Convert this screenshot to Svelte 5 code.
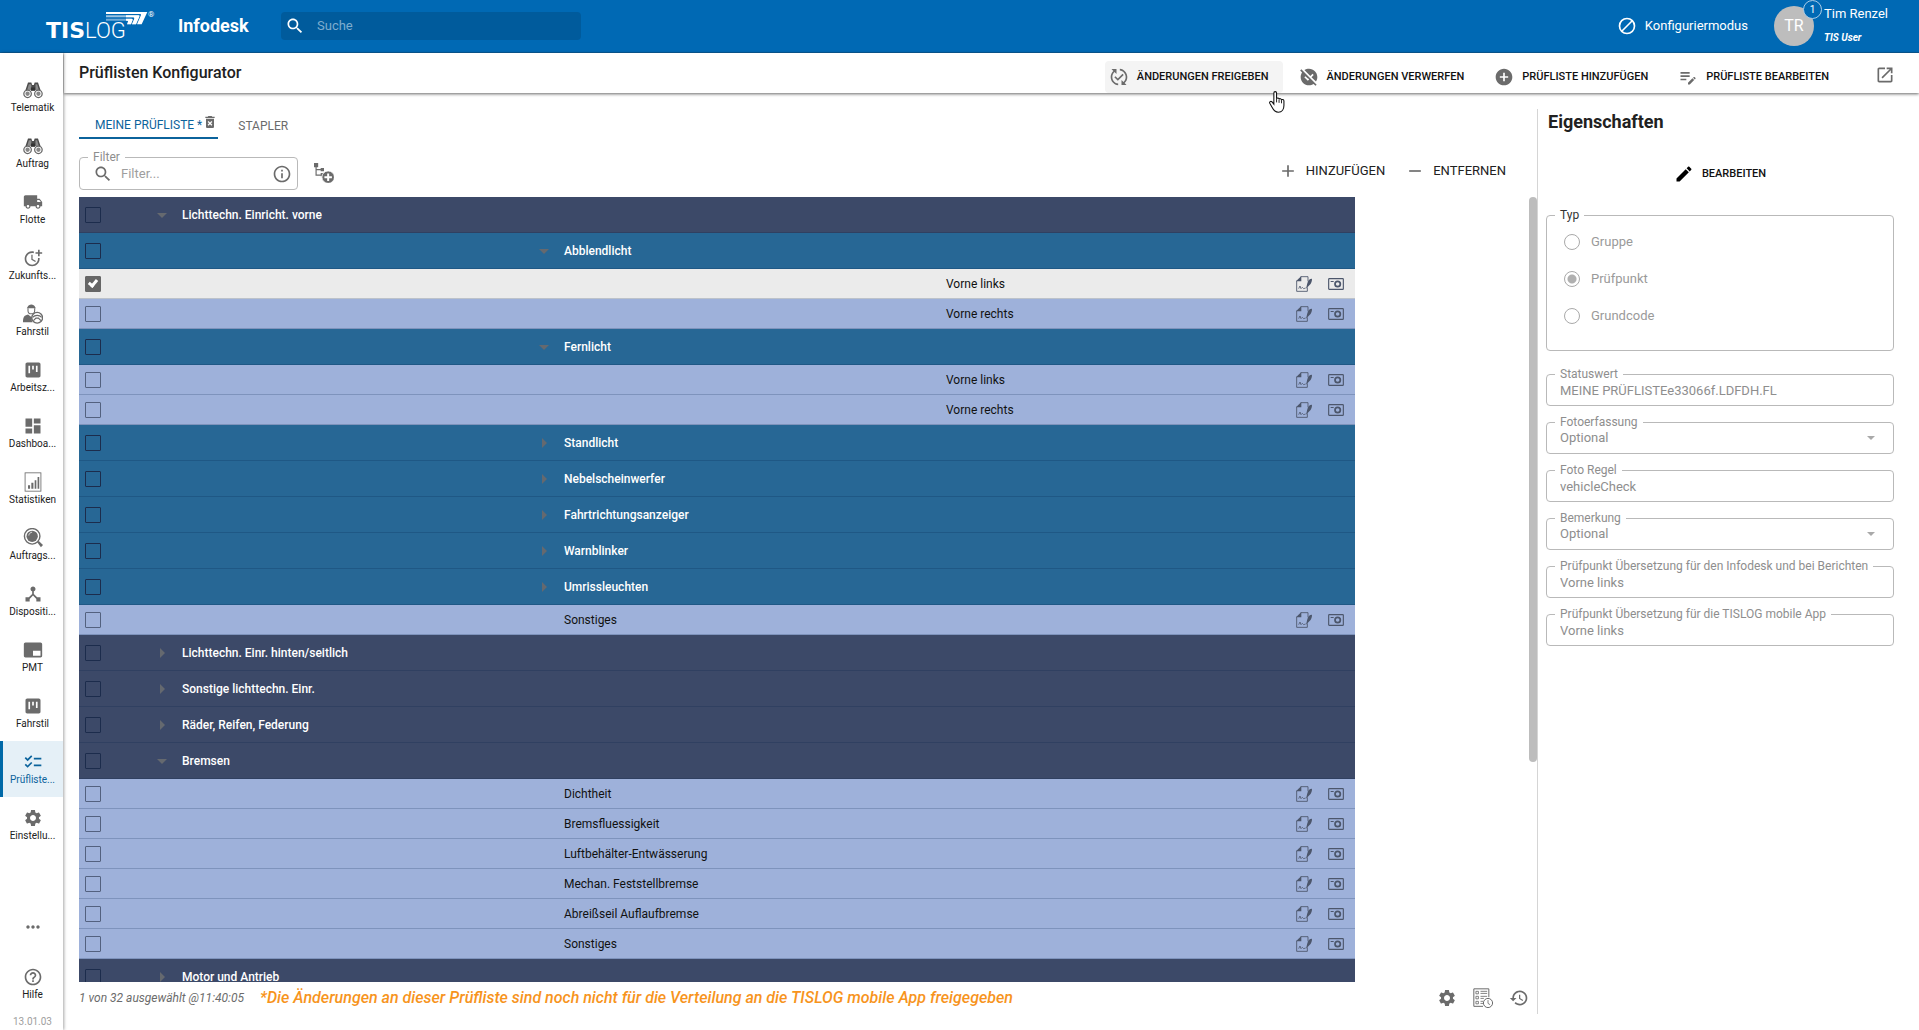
<script>
  const P = {
    search: 'M15.5 14h-.79l-.28-.27C15.41 12.59 16 11.11 16 9.5 16 5.91 13.09 3 9.5 3S3 5.91 3 9.5 5.91 16 9.5 16c1.61 0 3.09-.59 4.23-1.57l.27.28v.79l5 4.99L20.49 19l-4.99-5zm-6 0C7.01 14 5 11.99 5 9.5S7.01 5 9.5 5 14 7.01 14 9.5 11.99 14 9.5 14z',
    info: 'M11 7h2v2h-2zm0 4h2v6h-2zm1-9C6.48 2 2 6.48 2 12s4.48 10 10 10 10-4.48 10-10S17.52 2 12 2zm0 18c-4.41 0-8-3.59-8-8s3.59-8 8-8 8 3.59 8 8-3.59 8-8 8z',
    truck: 'M20 8h-3V4H3c-1.1 0-2 .9-2 2v11h2c0 1.66 1.34 3 3 3s3-1.34 3-3h6c0 1.66 1.34 3 3 3s3-1.34 3-3h2v-5l-3-4zM6 18.5c-.83 0-1.5-.67-1.5-1.5s.67-1.5 1.5-1.5 1.5.67 1.5 1.5-.67 1.5-1.5 1.5zm13.5-9l1.96 2.5H17V9.5h2.5zm-1.5 9c-.83 0-1.5-.67-1.5-1.5s.67-1.5 1.5-1.5 1.5.67 1.5 1.5-.67 1.5-1.5 1.5z',
    moretime: 'M10 8v6l4.7 2.9.8-1.2-4-2.4V8zM17.92 12c.05.33.08.66.08 1 0 3.9-3.1 7-7 7s-7-3.1-7-7c0-3.9 3.1-7 7-7 .7 0 1.37.1 2 .29V4.23c-.64-.15-1.31-.23-2-.23-5 0-9 4-9 9s4 9 9 9 9-4 9-9c0-.34-.02-.67-.06-1h-2.02zM20 5V2h-2v3h-3v2h3v3h2V7h3V5z',
    board: 'M19 3H5c-1.1 0-2 .9-2 2v14c0 1.1.9 2 2 2h14c1.1 0 2-.9 2-2V5c0-1.1-.9-2-2-2zM8.5 16h-2V7h2zM13 11.500h-2V7h2zM17.500 14.500h-2V7h2z',
    dashboard: 'M3 13h8V3H3v10zm0 8h8v-6H3v6zm10 0h8V11h-8v10zm0-18v6h8V3h-8z',
    hub: 'M17 16l-4-4V8.820C14.160 8.400 15 7.300 15 6c0-1.660-1.340-3-3-3S9 4.340 9 6c0 1.300.840 2.400 2 2.820V12l-4 4H3v5h5v-3.050l4-4.200 4 4.200V21h5v-5h-4z',
    pip: 'M21 3H3c-1.100 0-2 .9-2 2v14c0 1.100.9 2 2 2h18c1.100 0 2-.9 2-2V5c0-1.100-.9-2-2-2zm0 16h-9v-6h9v6z',
    checklist: 'M22 7h-9v2h9V7zm0 8h-9v2h9v-2zM5.540 11L2 7.460l1.410-1.410 2.120 2.120 4.240-4.240 1.410 1.410L5.540 11zm0 8L2 15.460l1.410-1.410 2.120 2.120 4.240-4.240 1.410 1.410L5.540 19z',
    gear: 'M19.14 12.94c.04-.3.06-.61.06-.94 0-.32-.02-.64-.07-.94l2.03-1.58c.18-.14.23-.41.12-.61l-1.92-3.32c-.12-.22-.37-.29-.59-.22l-2.39.96c-.5-.38-1.03-.7-1.62-.94l-.36-2.54c-.04-.24-.24-.41-.48-.41h-3.84c-.24 0-.43.17-.47.41l-.36 2.54c-.59.24-1.13.57-1.62.94l-2.39-.96c-.22-.08-.47 0-.59.22L2.74 8.87c-.12.21-.08.47.12.61l2.03 1.58c-.05.3-.09.63-.09.94s.02.64.07.94l-2.03 1.58c-.18.14-.23.41-.12.61l1.92 3.32c.12.22.37.29.59.22l2.39-.96c.5.38 1.03.7 1.62.94l.36 2.54c.05.24.24.41.48.41h3.84c.24 0 .44-.17.47-.41l.36-2.54c.59-.24 1.13-.56 1.62-.94l2.39.96c.22.08.47 0 .59-.22l1.92-3.32c.12-.22.07-.47-.12-.61l-2.01-1.58zM12 15.6c-1.98 0-3.6-1.62-3.6-3.6s1.62-3.6 3.6-3.6 3.600 1.620 3.600 3.600-1.620 3.600-3.600 3.600z',
    help: 'M11 18h2v-2h-2v2zm1-16C6.48 2 2 6.48 2 12s4.48 10 10 10 10-4.48 10-10S17.52 2 12 2zm0 18c-4.410 0-8-3.590-8-8s3.590-8 8-8 8 3.590 8 8-3.590 8-8 8zm0-14c-2.210 0-4 1.790-4 4h2c0-1.100.9-2 2-2s2 .9 2 2c0 2-3 1.750-3 5h2c0-2.250 3-2.500 3-5 0-2.210-1.790-4-4-4z',
    dots: 'M6 10c-1.100 0-2 .9-2 2s.9 2 2 2 2-.9 2-2-.9-2-2-2zm12 0c-1.100 0-2 .9-2 2s.9 2 2 2 2-.9 2-2-.9-2-2-2zm-6 0c-1.100 0-2 .9-2 2s.9 2 2 2 2-.9 2-2-.9-2-2-2z',
    history: 'M13 3c-4.970 0-9 4.030-9 9H1l3.890 3.890.070.140L9 12H6c0-3.870 3.130-7 7-7s7 3.130 7 7-3.130 7-7 7c-1.930 0-3.680-.790-4.940-2.060l-1.420 1.420C8.270 19.990 10.510 21 13 21c4.970 0 9-4.030 9-9s-4.030-9-9-9zm-1 5v5l4.280 2.540.720-1.210-3.500-2.080V8H12z',
    publish: 'M17.66 9.53l-7.07 7.07-4.24-4.24 1.41-1.41 2.83 2.83 5.66-5.66 1.41 1.41zM4 12c0-2.33 1.02-4.42 2.62-5.88L9 8.5v-6H3l2.2 2.2C3.24 6.52 2 9.11 2 12c0 5.19 3.95 9.45 9 9.95v-2.02c-3.94-.49-7-3.86-7-7.93zm18 0c0-5.19-3.95-9.45-9-9.95v2.02c3.94.49 7 3.86 7 7.93 0 2.33-1.02 4.42-2.62 5.88L15 15.5v6h6l-2.2-2.2c1.96-1.82 3.2-4.41 3.2-7.3z',
    unpublish: 'M21.19 21.19 2.81 2.81 1.39 4.22l2.27 2.27C2.61 8.07 2 9.96 2 12c0 5.52 4.48 10 10 10 2.04 0 3.93-.61 5.51-1.66l2.27 2.27 1.41-1.42zm-10.6-4.59-4.24-4.24 1.41-1.41 2.83 2.83.18-.18 1.41 1.41-1.59 1.59zm3-5.84-7.1-7.1C8.07 2.61 9.96 2 12 2c5.52 0 10 4.48 10 10 0 2.04-.61 3.93-1.66 5.51l-5.34-5.34 2.65-2.65-1.41-1.41-2.65 2.65z',
    addcircle: 'M12 2C6.48 2 2 6.48 2 12s4.48 10 10 10 10-4.48 10-10S17.52 2 12 2zm5 11h-4v4h-2v-4H7v-2h4V7h2v4h4v2z',
    editnote: 'M3 10h11v2H3v-2zm0-2h11V6H3v2zm0 8h7v-2H3v2zm15.01-3.13.71-.71c.39-.39 1.02-.39 1.41 0l.71.71c.39.39.39 1.02 0 1.41l-.71.71-2.12-2.12zm-.71.71-5.3 5.3V21h2.12l5.3-5.3-2.12-2.12z',
    open: 'M19 19H5V5h7V3H5c-1.11 0-2 .9-2 2v14c0 1.1.89 2 2 2h14c1.1 0 2-.9 2-2v-7h-2v7zM14 3v2h3.59l-9.83 9.83 1.41 1.41L19 6.41V10h2V3h-7z',
    edit: 'M3 17.25V21h3.75L17.81 9.94l-3.75-3.75L3 17.25zM20.71 7.04c.39-.39.39-1.02 0-1.41l-2.34-2.34c-.39-.39-1.02-.39-1.41 0l-1.83 1.83 3.75 3.75 1.83-1.83z',
    trash: 'M6 19c0 1.1.9 2 2 2h8c1.1 0 2-.9 2-2V7H6v12zm2.46-7.12l1.41-1.41L12 12.59l2.12-2.12 1.41 1.41L13.41 14l2.12 2.12-1.41 1.41L12 15.41l-2.12 2.12-1.41-1.41L10.59 14l-2.13-2.12zM15.5 4l-1-1h-5l-1 1H5v2h14V4z',
    plus: 'M19 13h-6v6h-2v-6H5v-2h6V5h2v6h6v2z',
    minus: 'M19 13H5v-2h14v2z'
  };

  const nav = [
    { label: 'Telematik', icon: 'binoculars' },
    { label: 'Auftrag', icon: 'binoculars' },
    { label: 'Flotte', icon: 'truck' },
    { label: 'Zukunfts...', icon: 'moretime' },
    { label: 'Fahrstil', icon: 'driver' },
    { label: 'Arbeitsz...', icon: 'board' },
    { label: 'Dashboa...', icon: 'dashboard' },
    { label: 'Statistiken', icon: 'chart' },
    { label: 'Auftrags...', icon: 'lens' },
    { label: 'Dispositi...', icon: 'hub' },
    { label: 'PMT', icon: 'pip' },
    { label: 'Fahrstil', icon: 'board' },
    { label: 'Prüfliste...', icon: 'checklist', active: true },
    { label: 'Einstellu...', icon: 'gear' }
  ];

  const actions = [
    { label: 'ÄNDERUNGEN FREIGEBEN', icon: 'publish', hover: true },
    { label: 'ÄNDERUNGEN VERWERFEN', icon: 'unpublish' },
    { label: 'PRÜFLISTE HINZUFÜGEN', icon: 'addcircle' },
    { label: 'PRÜFLISTE BEARBEITEN', icon: 'editnote' }
  ];

  // kind: root = top group, group = sub group, item = check point; level = column that holds the name
  const rows = [
    { kind: 'root', level: 0, name: 'Lichttechn. Einricht. vorne', open: true },
    { kind: 'group', level: 1, name: 'Abblendlicht', open: true },
    { kind: 'item', level: 2, name: 'Vorne links', checked: true },
    { kind: 'item', level: 2, name: 'Vorne rechts' },
    { kind: 'group', level: 1, name: 'Fernlicht', open: true },
    { kind: 'item', level: 2, name: 'Vorne links' },
    { kind: 'item', level: 2, name: 'Vorne rechts' },
    { kind: 'group', level: 1, name: 'Standlicht' },
    { kind: 'group', level: 1, name: 'Nebelscheinwerfer' },
    { kind: 'group', level: 1, name: 'Fahrtrichtungsanzeiger' },
    { kind: 'group', level: 1, name: 'Warnblinker' },
    { kind: 'group', level: 1, name: 'Umrissleuchten' },
    { kind: 'item', level: 1, name: 'Sonstiges' },
    { kind: 'root', level: 0, name: 'Lichttechn. Einr. hinten/seitlich' },
    { kind: 'root', level: 0, name: 'Sonstige lichttechn. Einr.' },
    { kind: 'root', level: 0, name: 'Räder, Reifen, Federung' },
    { kind: 'root', level: 0, name: 'Bremsen', open: true },
    { kind: 'item', level: 1, name: 'Dichtheit' },
    { kind: 'item', level: 1, name: 'Bremsfluessigkeit' },
    { kind: 'item', level: 1, name: 'Luftbehälter-Entwässerung' },
    { kind: 'item', level: 1, name: 'Mechan. Feststellbremse' },
    { kind: 'item', level: 1, name: 'Abreißseil Auflaufbremse' },
    { kind: 'item', level: 1, name: 'Sonstiges' },
    { kind: 'root', level: 0, name: 'Motor und Antrieb' }
  ];

  const types = ['Gruppe', 'Prüfpunkt', 'Grundcode'];

  const fields = [
    { label: 'Statuswert', value: 'MEINE PRÜFLISTEe33066f.LDFDH.FL' },
    { label: 'Fotoerfassung', value: 'Optional', select: true },
    { label: 'Foto Regel', value: 'vehicleCheck' },
    { label: 'Bemerkung', value: 'Optional', select: true },
    { label: 'Prüfpunkt Übersetzung für den Infodesk und bei Berichten', value: 'Vorne links' },
    { label: 'Prüfpunkt Übersetzung für die TISLOG mobile App', value: 'Vorne links' }
  ];
</script>

{#snippet icon(name)}
  <svg class="icon" viewBox="0 0 24 24" aria-hidden="true">
    {#if name === 'binoculars'}
      <path d="M6 3h4l1 3h2l1-3h4l3 9H13v-2h-2v2H3z" fill="#4a4a4a" />
      <path d="M7 5l-2 7h5V5zM15 5v7h4l-2-7z" fill="#8c8c8c" />
      <circle cx="5.500" cy="16.500" r="4.500" fill="#fff" stroke="#666" stroke-width="1.500" />
      <circle cx="5.500" cy="16.500" r="2.600" fill="#888" />
      <circle cx="18.500" cy="16.500" r="4.500" fill="#fff" stroke="#666" stroke-width="1.500" />
      <circle cx="18.500" cy="16.500" r="2.600" fill="#888" />
      <path d="M9.500 9h5v4h-5z" fill="#333" />
    {:else if name === 'driver'}
      <path d="M5.500 3.500c1-4 8-4 9 0l1 1.500h-11z" />
      <path d="M6 5v3c0 5 8 5 8 0V5" fill="none" stroke="currentColor" stroke-width="1.300" />
      <path d="M0 22c0-6 1-8.500 6-9.500l4 3 3-2c-3 3-3 6-1.500 8.500z" />
      <circle cx="17" cy="16.500" r="6.500" fill="#fff" stroke="currentColor" stroke-width="1.600" />
      <path d="M11.500 16c3-3 8-3 11 0M12.500 20l3-3h3l3 3" fill="none" stroke="currentColor" stroke-width="1.500" />
    {:else if name === 'chart'}
      <rect x="2.500" y="1" width="19" height="22" fill="none" stroke="currentColor" />
      <path d="M6 16h2.500v4H6zM10 13h2.500v7H10zM14 10h2v10h-2zM17.500 6h2v14h-2z" />
    {:else if name === 'lens'}
      <circle cx="11" cy="10" r="9.300" fill="none" stroke="currentColor" stroke-width="1.700" />
      <circle cx="11" cy="10" r="6.800" />
      <path d="M7 9c0-2 2-4 4-4" fill="none" stroke="#ddd" stroke-width="1.200" />
      <path d="M17 17l2-1.500 5 5-2.500 2.500z" />
    {:else if name === 'block'}
      <circle cx="12" cy="12" r="9" fill="none" stroke="currentColor" stroke-width="2" />
      <path d="M6 18L18 6" stroke="currentColor" stroke-width="2" />
    {:else if name === 'treeadd'}
      <path d="M0 0h5v5H0zM8 6h4v4H8zM8 12h4v4H8z" />
      <path d="M2.500 4v10.500H9M2.500 8H9" fill="none" stroke="currentColor" stroke-width="1.400" />
      <circle cx="17" cy="17" r="7.500" fill="currentColor" stroke="#fff" />
      <path d="M17 12.500v9M12.500 17h9" stroke="#fff" stroke-width="2.400" />
    {:else if name === 'sign'}
      <path d="M7 1h11v7M1 7v16h16v-6" fill="none" stroke="currentColor" stroke-width="1.300" />
      <path d="M8 0v8H0z" />
      <path d="M4 19l2-4 1.500 4 2-2 2 2 3-1" fill="none" stroke="currentColor" stroke-width="1.200" />
      <path d="M24 4c-4 0-6 3-7 7l-2 8 5-5c3-3 4-6 4-10z" />
    {:else if name === 'camera'}
      <rect x="1" y="4" width="22" height="16" rx="1" fill="none" stroke="currentColor" stroke-width="1.700" />
      <circle cx="14.500" cy="12" r="4" fill="none" stroke="currentColor" stroke-width="2.600" />
      <path d="M4 7.500h4.500V9H4z" />
    {:else if name === 'listclock'}
      <path d="M12 22H1V1h18v10" fill="none" stroke="currentColor" stroke-width="1.200" />
      <path d="M3.500 4h3v3h-3zM3.500 10h3v3h-3zM3.500 16h3v3h-3z" fill="none" stroke="currentColor" />
      <path d="M9 4h8M9 6.500h8M9 10h8M9 12.500h4M9 16h3M9 18.500h3" stroke="currentColor" />
      <circle cx="18" cy="18" r="5.500" fill="#fff" stroke="currentColor" stroke-width="1.200" />
      <path d="M18 14.500v4l2.500 1.500" fill="none" stroke="currentColor" />
    {:else}
      <path d={P[name]} />
    {/if}
  </svg>
{/snippet}

<div class="app">
  <header class="topbar">
    <div class="logo" aria-label="TISLOG">
      <span class="tis">TIS</span><span class="log">LOG</span>
      <svg class="swoosh" viewBox="0 0 126 39" aria-hidden="true">
        <path d="M0 0h124l-17 37H93l12-28q1-3-3-3H0z" fill="#fff" />
        <path d="M0 10h97q5 0 3 4L90 37H78l7-17q1-4-4-4H0z" fill="#9cc4e2" />
        <path d="M0 20h76q5 0 4 4l-5 13H63l3-8q1-3-3-3H0z" fill="#6fa9d4" />
        <path d="M60 10h37q5 0 3 4L90 37H78l7-17q1-4-4-4H60zM60 20h16q5 0 4 4l-5 13H63l3-8q1-3-3-3h-3z" fill="#fff" />
      </svg>
      <span class="reg">®</span>
    </div>
    <strong class="product">Infodesk</strong>
    <label class="search">
      {@render icon('search')}
      <input type="search" placeholder="Suche" aria-label="Suche" />
    </label>
    <button class="config">{@render icon('block')}<span>Konfiguriermodus</span></button>
    <div class="user">
      <div class="avatar">TR<span class="badge">1</span></div>
      <div class="who"><span class="name">Tim Renzel</span><em>TIS User</em></div>
    </div>
  </header>

  <nav class="sidebar">
    {#each nav as n}
      <a href="#nav" class="navitem" class:active={n.active}>{@render icon(n.icon)}<span>{n.label}</span></a>
    {/each}
    <button class="more" aria-label="Mehr">{@render icon('dots')}</button>
    <a href="#hilfe" class="navitem">{@render icon('help')}<span>Hilfe</span></a>
    <small>13.01.03</small>
  </nav>

  <div class="page">
    <div class="pagehead">
      <h1>Prüflisten Konfigurator</h1>
      <div class="actions">
        {#each actions as a}
          <button class="action" class:hover={a.hover}>
            {@render icon(a.icon)}<span>{a.label}</span>
            {#if a.hover}
              <svg class="cursor" viewBox="0 0 20 26" aria-hidden="true">
                <path d="M6.500 16V3.500c0-2 3-2 3 0V10c.5-1.500 2.800-1 2.800.5.6-1.200 2.700-.7 2.700.8.700-1 2.700-.5 2.700 1.200v5c0 4-2 7.500-6.200 7.500-4 0-5.500-2.500-7-5.500l-2.500-4.500c-.8-1.600 1.200-2.800 2.500-1.500z" fill="#fff" stroke="#111" stroke-width="1.200" />
                <path d="M9.500 10v4M12.300 11v3.500M15 12v3" stroke="#111" />
              </svg>
            {/if}
          </button>
        {/each}
      </div>
      <button class="openbtn" aria-label="In neuem Fenster öffnen">{@render icon('open')}</button>
    </div>

    <div class="body">
      <main>
        <div class="tabs" role="tablist">
          <button class="tab active" role="tab" aria-selected="true">MEINE PRÜFLISTE *{@render icon('trash')}</button>
          <button class="tab" role="tab" aria-selected="false">STAPLER</button>
        </div>
        <div class="tools">
          <label class="filter">
            <span class="caption">Filter</span>
            <span class="filterrow">
              {@render icon('search')}
              <input placeholder="Filter..." />
              {@render icon('info')}
            </span>
          </label>
          <button class="iconbtn" aria-label="Baum erweitern">{@render icon('treeadd')}</button>
          <span class="grow"></span>
          <button class="flat">{@render icon('plus')}<span>HINZUFÜGEN</span></button>
          <button class="flat">{@render icon('minus')}<span>ENTFERNEN</span></button>
        </div>

        <div class="scroll">
          <div class="clip">
            <table>
              <colgroup><col class="c-check" /><col /><col /><col /><col class="c-icons" /></colgroup>
              <tbody>
                {#each rows as r}
                  <tr class={r.kind} class:selected={r.checked}>
                    <td class="check"><input type="checkbox" checked={r.checked} aria-label={r.name} /></td>
                    {#each [0, 1, 2] as l}
                      <td>
                        {#if l === r.level}
                          <div class="cell">
                            <svg class="arrow" viewBox="0 0 10 10" aria-hidden="true">
                              {#if r.kind !== 'item'}
                                <path d={r.open ? 'M0 3h10L5 8z' : 'M3 0v10l5-5z'} />
                              {/if}
                            </svg>
                            <span>{r.name}</span>
                          </div>
                        {/if}
                      </td>
                    {/each}
                    <td>
                      {#if r.kind === 'item'}
                        <div class="rowicons">{@render icon('sign')}{@render icon('camera')}</div>
                      {/if}
                    </td>
                  </tr>
                {/each}
              </tbody>
            </table>
          </div>
          <div class="track"><div class="thumb"></div></div>
        </div>

        <footer>
          <em class="count">1 von 32 ausgewählt @11:40:05</em>
          <em class="warn">*Die Änderungen an dieser Prüfliste sind noch nicht für die Verteilung an die TISLOG mobile App freigegeben</em>
          <span class="grow"></span>
          <button class="iconbtn" aria-label="Einstellungen">{@render icon('gear')}</button>
          <button class="iconbtn" aria-label="Protokoll">{@render icon('listclock')}</button>
          <button class="iconbtn" aria-label="Verlauf">{@render icon('history')}</button>
        </footer>
      </main>

      <aside>
        <h2>Eigenschaften</h2>
        <button class="edit">{@render icon('edit')}<span>BEARBEITEN</span></button>
        <div class="field types" role="radiogroup" aria-label="Typ">
          <span class="caption dark">Typ</span>
          {#each types as t}
            <label class="radio"><input type="radio" name="typ" value={t} checked={t === 'Prüfpunkt'} disabled />{t}</label>
          {/each}
        </div>
        {#each fields as f}
          <label class="field">
            <span class="caption">{f.label}</span>
            {#if f.select}
              <span class="selectrow">
                <select disabled><option>{f.value}</option></select>
                <svg class="down" viewBox="0 0 8 4" aria-hidden="true"><path d="M0 0h8L4 4z" /></svg>
              </span>
            {:else}
              <input disabled value={f.value} />
            {/if}
          </label>
        {/each}
      </aside>
    </div>
  </div>
</div>

<style>
  :global(body) {
    margin: 0;
  }
  .app {
    display: grid;
    grid-template: 53px minmax(0, 1fr) / 64px minmax(0, 1fr);
    height: 100vh;
    overflow: hidden;
    background: #fff;
    color: #212121;
    font: 13px/16px Roboto, sans-serif;
  }
  button,
  input,
  select {
    font: inherit;
    color: inherit;
    background: none;
    border: 0;
    padding: 0;
    margin: 0;
    outline: 0;
    min-width: 0;
  }
  a {
    color: inherit;
    text-decoration: none;
  }
  .icon {
    width: 20px;
    height: 20px;
    flex: none;
    fill: currentColor;
    color: #6b6b6b;
  }
  .grow {
    flex: 1;
  }

  .topbar {
    grid-column: 1 / -1;
    display: flex;
    align-items: center;
    box-sizing: border-box;
    padding: 0 31px 0 46px;
    background: #0069b4;
    border-bottom: 1px solid #0a5c98;
    color: #fff;
  }
  .logo {
    display: flex;
    position: relative;
    width: 132px;
    padding-top: 10px;
    font-size: 22px;
    line-height: 24px;
  }
  .tis {
    font-family: 'DejaVu Sans', sans-serif;
    font-weight: 700;
  }
  .log {
    font-weight: 300;
  }
  .swoosh {
    position: absolute;
    left: 60px;
    top: 3px;
    width: 42px;
    height: 13px;
  }
  .reg {
    position: absolute;
    left: 102px;
    top: 0;
    font-size: 8px;
    line-height: 12px;
  }
  .product {
    width: 103px;
    font-size: 18px;
    line-height: 24px;
    font-weight: 700;
  }
  .search {
    display: flex;
    align-items: center;
    gap: 12px;
    box-sizing: border-box;
    width: 300px;
    height: 28px;
    padding: 0 4px;
    border-radius: 4px;
    background: #005b9c;
  }
  .topbar .icon {
    color: #fff;
  }
  .search input {
    flex: 1;
  }
  .search input::placeholder {
    color: #7fadcf;
    opacity: 1;
  }
  .config {
    display: flex;
    align-items: center;
    gap: 8px;
    margin-left: auto;
  }
  .user {
    display: flex;
    gap: 10px;
    margin-left: 26px;
  }
  .avatar {
    position: relative;
    width: 40px;
    height: 40px;
    border-radius: 50%;
    background: #bdbdbd;
    font-size: 16px;
    line-height: 40px;
    text-align: center;
  }
  .badge {
    position: absolute;
    right: -8px;
    top: -6px;
    width: 17px;
    height: 17px;
    border: 1px solid #a9cbe6;
    border-radius: 50%;
    background: #0069b4;
    font-size: 10px;
    line-height: 17px;
  }
  .who {
    display: flex;
    flex-direction: column;
    justify-content: space-between;
  }
  .who em {
    font-size: 10px;
    font-weight: 700;
  }

  .sidebar {
    display: flex;
    flex-direction: column;
    box-sizing: border-box;
    width: 63px;
    padding: 16px 0 2px;
    background: #fff;
    box-shadow: 1px 0 3px rgba(0, 0, 0, 0.35);
    font-size: 10px;
    line-height: 12px;
    z-index: 2;
  }
  .navitem {
    display: flex;
    flex-direction: column;
    align-items: center;
    gap: 2px;
    box-sizing: border-box;
    height: 56px;
    padding: 11px 0 0 2px;
    white-space: nowrap;
  }
  .navitem.active {
    box-shadow: inset 3px 0 #0069a8;
    background: #e5f0f7;
    color: #0b639c;
  }
  .navitem.active .icon {
    color: #0b639c;
  }
  .more {
    margin: auto auto 16px;
    padding-left: 3px;
  }
  .sidebar small {
    padding: 4px 0 0 2px;
    font-size: 10px;
    text-align: center;
    color: #9e9e9e;
  }

  .page {
    display: flex;
    flex-direction: column;
    min-height: 0;
  }
  .pagehead {
    display: flex;
    align-items: center;
    box-sizing: border-box;
    height: 40px;
    padding: 0 24px 0 15px;
    background: #fff;
    box-shadow: 0 1px 3px rgba(0, 0, 0, 0.6);
    z-index: 1;
  }
  h1 {
    flex: 1;
    margin: 0;
    font-size: 16px;
    line-height: 20px;
    font-weight: 500;
  }
  .actions {
    display: flex;
    align-self: flex-end;
    gap: 12px;
  }
  .action {
    display: flex;
    position: relative;
    align-items: center;
    gap: 8px;
    height: 32px;
    padding: 0 14px 0 4px;
    border-radius: 4px;
    color: #111;
    font-size: 11px;
    font-weight: 500;
    white-space: nowrap;
  }
  .action.hover {
    background: #f4f4f4;
  }
  .cursor {
    position: absolute;
    right: -3px;
    top: 28px;
    width: 18px;
    height: 25px;
  }
  .openbtn {
    display: flex;
    margin-left: 32px;
    padding-top: 4px;
  }

  .body {
    flex: 1;
    display: flex;
    min-height: 0;
    padding: 16px 25px 16px 15px;
  }
  main {
    flex: 1;
    display: flex;
    flex-direction: column;
    min-width: 0;
  }
  .tabs {
    display: flex;
    height: 30px;
    font-size: 12px;
  }
  .tab {
    display: flex;
    align-items: center;
    padding: 4px 20px 0;
    color: #6b6b6b;
  }
  .tab .icon {
    width: 16px;
    height: 16px;
    margin-bottom: 6px;
  }
  .tab.active {
    padding: 4px 0 0 16px;
    border-bottom: 2px solid #0b639c;
    color: #0b639c;
  }
  .tools {
    display: flex;
    align-items: flex-start;
    padding: 18px 31px 7px 0;
  }
  .filter,
  .field {
    display: flex;
    flex-direction: column;
    box-sizing: border-box;
    border: 1px solid #b9b9b9;
    border-radius: 4px;
  }
  .filter {
    width: 219px;
    height: 33px;
  }
  .caption {
    align-self: flex-start;
    margin: -8px 0 0 8px;
    padding: 0 5px;
    background: #fff;
    color: #8e8e8e;
    font-size: 12px;
    line-height: 14px;
    white-space: nowrap;
  }
  .caption.dark {
    color: #333;
  }
  .filterrow {
    display: flex;
    align-items: center;
    gap: 8px;
    height: 20px;
    padding: 0 5px 0 13px;
  }
  .filterrow input {
    flex: 1;
  }
  .filterrow input::placeholder {
    color: #9e9e9e;
    opacity: 1;
  }
  .iconbtn {
    display: flex;
  }
  .tools .iconbtn {
    margin: 6px 0 0 16px;
  }
  .flat {
    display: flex;
    align-items: center;
    gap: 8px;
    margin: 4px 0 0 20px;
  }

  .scroll {
    flex: 1;
    display: flex;
    min-height: 0;
  }
  .clip {
    flex: 1;
    overflow: hidden;
    padding-right: 174px;
  }
  table {
    width: 100%;
    table-layout: fixed;
    border-collapse: separate;
    border-spacing: 0;
    font-size: 12px;
  }
  .c-check {
    width: 70px;
  }
  .c-icons {
    width: 60px;
  }
  tr {
    height: 36px;
    background: #3c4968;
    color: #fff;
    font-weight: 500;
  }
  tr.group {
    background: #276795;
  }
  tr.item {
    height: 30px;
    background: #9eb1da;
    color: #111;
    font-weight: 400;
  }
  tr.item.selected {
    background: #ebebeb;
  }
  td {
    padding: 0;
    border-bottom: 1px solid rgba(0, 30, 70, 0.2);
  }
  .check {
    padding-left: 6px;
  }
  input[type='checkbox'] {
    display: grid;
    place-items: center;
    appearance: none;
    box-sizing: border-box;
    width: 16px;
    height: 16px;
    border: 1px solid #53617f;
    border-radius: 1px;
  }
  .root input[type='checkbox'],
  .group input[type='checkbox'] {
    border-color: #1c2c4c;
  }
  input[type='checkbox']:checked {
    border-color: #666;
    background: #666;
  }
  input[type='checkbox']:checked::after {
    content: '';
    width: 3px;
    height: 6px;
    margin-bottom: 2px;
    border: solid #fff;
    border-width: 0 3px 3px 0;
    transform: rotate(40deg);
  }
  .cell {
    display: flex;
    align-items: center;
    gap: 15px;
    padding-left: 8px;
    white-space: nowrap;
  }
  .arrow {
    width: 10px;
    height: 10px;
    fill: #65696f;
  }
  .rowicons {
    display: flex;
    gap: 16px;
    padding-left: 1px;
  }
  .rowicons .icon {
    width: 16px;
    height: 16px;
    color: #4c566b;
  }
  .track {
    width: 8px;
  }
  .thumb {
    height: 72%;
    border-radius: 4px;
    background: #bdbdbd;
  }
  footer {
    display: flex;
    align-items: center;
    gap: 16px;
    height: 32px;
    padding-right: 8px;
    white-space: nowrap;
  }
  .count {
    font-size: 12px;
    color: #6b6b6b;
  }
  .warn {
    color: #f7941d;
    font-size: 16px;
    line-height: 20px;
    font-weight: 500;
  }

  aside {
    display: flex;
    flex-direction: column;
    box-sizing: border-box;
    width: 357px;
    padding-left: 8px;
    border-left: 1px solid #d5d5d5;
  }
  h2 {
    margin: 1px 0 0 2px;
    font-size: 18px;
    line-height: 24px;
    font-weight: 700;
  }
  .edit {
    display: flex;
    align-items: center;
    align-self: center;
    gap: 8px;
    margin: 30px 0 31px;
    font-size: 11px;
    font-weight: 500;
    color: #111;
  }
  .edit .icon {
    color: #000;
  }
  .field {
    height: 32px;
    margin-bottom: 16px;
    color: #9a9a9a;
  }
  .field input:not([type]),
  .field select {
    flex: none;
    height: 18px;
    padding: 0 13px;
    color: #8e8e8e;
    opacity: 1;
  }
  .selectrow {
    display: flex;
    align-items: center;
    padding-right: 18px;
  }
  .selectrow select {
    flex: 1;
    appearance: none;
  }
  .down {
    width: 8px;
    height: 4px;
    fill: #a9a9a9;
  }
  .field.types {
    height: 136px;
    margin-bottom: 23px;
  }
  .types .caption {
    margin-bottom: 12px;
  }
  .radio {
    display: flex;
    align-items: center;
    gap: 11px;
    height: 16px;
    padding: 0 0 21px 17px;
  }
  .radio input {
    appearance: none;
    box-sizing: border-box;
    width: 16px;
    height: 16px;
    border: 1px solid #a9a9a9;
    border-radius: 50%;
  }
  .radio input:checked {
    background: radial-gradient(circle, #b0b0b0 4px, transparent 5px);
  }
</style>
